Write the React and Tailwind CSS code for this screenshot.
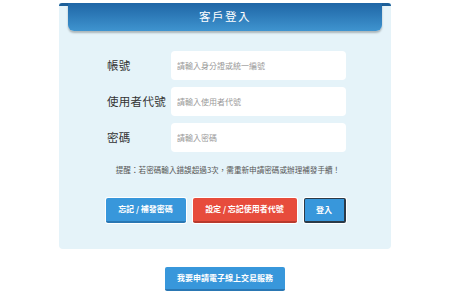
import React from "react";

const font = { fontFamily: '"Noto Sans CJK TC", "Noto Sans", sans-serif' };

const fields = [
  { label: "帳號", placeholder: "請輸入身分證或統一編號", type: "text" },
  { label: "使用者代號", placeholder: "請輸入使用者代號", type: "text" },
  { label: "密碼", placeholder: "請輸入密碼", type: "password" },
];

const App = () => {
  return (
    <div
      className="w-[450px] h-[293px] bg-white overflow-hidden font-['Noto_Sans_CJK_TC',sans-serif]"
      style={font}
    >
      <div className="mx-auto mt-[3px] w-[332px] h-[246px] bg-[#e5f3f9] rounded-b-[4px] relative">
        {/* ears of the header */}
        <div className="absolute left-0 top-0 w-full h-[3px] bg-[#1d5f99] rounded-t-[3px]" />
        <div className="relative mx-[9px] h-[28px] rounded-b-[6px] bg-gradient-to-b from-[#1f66a6] to-[#3f94cf] shadow-[0_2px_2px_rgba(0,0,0,0.25)] flex items-center justify-center">
          <span className="text-white text-[11.5px] tracking-[1.5px] leading-none">
            客戶登入
          </span>
        </div>

        <div className="flex flex-col gap-[7px] mt-[20px] pl-[48px]">
          {fields.map((f) => (
            <div key={f.label} className="flex items-center">
              <label className="w-[64px] text-[11.5px] text-[#333] tracking-[0.3px]">
                {f.label}
              </label>
              <input
                type={f.type}
                placeholder={f.placeholder}
                className="w-[175px] h-[29px] bg-white rounded-[4px] px-[6px] text-[8px] outline-none placeholder:text-[#999]"
              />
            </div>
          ))}
        </div>

        <p className="mt-[14px] text-center text-[7.6px] text-[#555] leading-none pl-[6px]">
          提醒：若密碼輸入錯誤超過3次，需重新申請密碼或辦理補發手續！
        </p>

        <div className="flex justify-center gap-[7px] mt-[24px] pl-[1px]">
          <button className="w-[80px] h-[25px] bg-[#3897db] border-b-2 border-[#2a77b3] rounded-[2px] text-white text-[8px] font-bold shadow-[0_0_0_1px_#fff]">
            忘記 / 補發密碼
          </button>
          <button className="w-[104px] h-[25px] bg-[#e74c3c] border-b-2 border-[#b83a2d] rounded-[2px] text-white text-[8px] font-bold shadow-[0_0_0_1px_#fff]">
            設定 / 忘記使用者代號
          </button>
          <button className="w-[42px] h-[25px] bg-[#3897db] border border-[#2b3a48] border-r-2 border-b-2 rounded-[2px] text-white text-[8px] font-bold shadow-[0_0_0_1px_#fff]">
            登入
          </button>
        </div>
      </div>

      <div className="flex justify-center mt-[18px]">
        <button className="w-[120px] h-[24px] bg-[#3897db] border-b-2 border-[#2a77b3] rounded-[2px] text-white text-[8px] font-bold">
          我要申請電子線上交易服務
        </button>
      </div>
    </div>
  );
};

export default App;
